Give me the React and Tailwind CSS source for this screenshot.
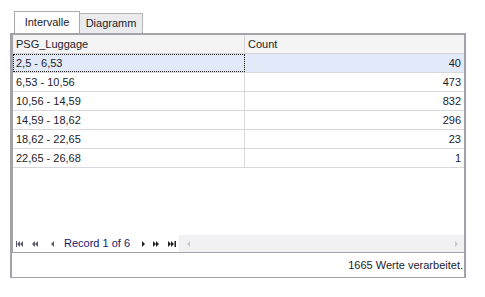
import React from 'react'

const rows = [
  ['2,5 - 6,53', '40'],
  ['6,53 - 10,56', '473'],
  ['10,56 - 14,59', '832'],
  ['14,59 - 18,62', '296'],
  ['18,62 - 22,65', '23'],
  ['22,65 - 26,68', '1'],
]

function NavIcon({ kind }) {
  // tiny DevExpress-style navigator glyphs
  const c = '#5a5a6a'
  if (kind === 'first')
    return (
      <svg width="7" height="6" viewBox="0 0 7 6">
        <rect x="0" y="0" width="1" height="6" fill={c} />
        <path d="M4 0 L1 3 L4 6Z M7 0 L4 3 L7 6Z" fill={c} />
      </svg>
    )
  if (kind === 'prevPage')
    return (
      <svg width="6" height="6" viewBox="0 0 6 6">
        <path d="M3 0 L0 3 L3 6Z M6 0 L3 3 L6 6Z" fill={c} />
      </svg>
    )
  if (kind === 'prev')
    return (
      <svg width="3" height="6" viewBox="0 0 3 6">
        <path d="M3 0 L0 3 L3 6Z" fill={c} />
      </svg>
    )
  if (kind === 'next')
    return (
      <svg width="3" height="6" viewBox="0 0 3 6">
        <path d="M0 0 L3 3 L0 6Z" fill="#222" />
      </svg>
    )
  if (kind === 'nextPage')
    return (
      <svg width="6" height="6" viewBox="0 0 6 6">
        <path d="M0 0 L3 3 L0 6Z M3 0 L6 3 L3 6Z" fill="#222" />
      </svg>
    )
  return (
    <svg width="8" height="6" viewBox="0 0 8 6">
      <path d="M0 0 L3 3 L0 6Z M3 0 L6 3 L3 6Z" fill="#222" />
      <rect x="6.5" y="0" width="1.5" height="6" fill="#222" />
    </svg>
  )
}

export default function App() {
  return (
    <div className="w-[485px] h-[297px] bg-white font-['Liberation_Sans',Arial,sans-serif] text-[11px] text-[#1b1b2b] overflow-hidden">
      <div className="pt-[11px] pl-[10px]">
        {/* Tabs */}
        <div className="flex items-end h-[22px] pl-[4px]">
          <div className="w-[66px] h-[22px] border border-b-0 border-[#a9a9b0] bg-white flex items-center justify-center pb-[1px]">
            Intervalle
          </div>
          <div className="w-[63px] h-[20px] border border-l-0 border-b-0 border-[#b4b4ba] bg-[#ebebee] flex items-center justify-center">
            Diagramm
          </div>
        </div>

        {/* Panel */}
        <div className="w-[456px] h-[245px] border-t-2 border-r-2 border-b-[1px] border-l-2 border-[#a2a2aa] flex flex-col">
          <div className="flex-1 flex flex-col border-l border-[#a2a2aa]">
            {/* Header */}
            <div className="flex h-[19px] bg-[#f4f4f5] border-b border-[#d4d4d8]">
              <div className="w-[232px] border-r border-[#d4d4d8] pl-[3px] flex items-center">PSG_Luggage</div>
              <div className="flex-1 pl-[3px] flex items-center">Count</div>
            </div>

            {/* Rows */}
            {rows.map(([range, count], i) => (
              <div
                key={range}
                className={`flex h-[19px] border-b border-[#d8d8dc] ${i === 0 ? 'bg-[#e2e9f9]' : 'bg-white'}`}
              >
                <div
                  className={`w-[232px] border-r border-[#d8d8dc] pl-[3px] flex items-center ${
                    i === 0 ? 'outline outline-1 outline-dotted outline-[#222] -outline-offset-1' : ''
                  }`}
                >
                  {range}
                </div>
                <div className="flex-1 pr-[3px] flex items-center justify-end">{count}</div>
              </div>
            ))}

            <div className="flex-1 bg-white" />

            {/* Navigator */}
            <div className="flex h-[18px] border-b border-[#a2a2aa]">
              <div className="flex items-center pl-[3px] pr-[3px] bg-white whitespace-nowrap shrink-0">
                <NavIcon kind="first" />
                <span className="ml-[9px] flex"><NavIcon kind="prevPage" /></span>
                <span className="ml-[13px] flex"><NavIcon kind="prev" /></span>
                <span className="ml-[10px] text-[#13206a]">Record 1 of 6</span>
                <span className="ml-[12px] flex"><NavIcon kind="next" /></span>
                <span className="ml-[8px] flex"><NavIcon kind="nextPage" /></span>
                <span className="ml-[9px] flex"><NavIcon kind="last" /></span>
              </div>
              <div className="flex-1 bg-[#f1f1f3] flex items-center justify-between pl-[8px] pr-[6px]">
                <svg width="3" height="6" viewBox="0 0 3 6">
                  <path d="M3 0 L0 3 L3 6Z" fill="#c8c8cc" />
                </svg>
                <svg width="3" height="6" viewBox="0 0 3 6">
                  <path d="M0 0 L3 3 L0 6Z" fill="#c8c8cc" />
                </svg>
              </div>
            </div>
          </div>

          {/* Status */}
          <div className="h-[24px] flex items-center justify-end pr-[1px] bg-white">
            1665 Werte verarbeitet.
          </div>
        </div>
      </div>
    </div>
  )
}
